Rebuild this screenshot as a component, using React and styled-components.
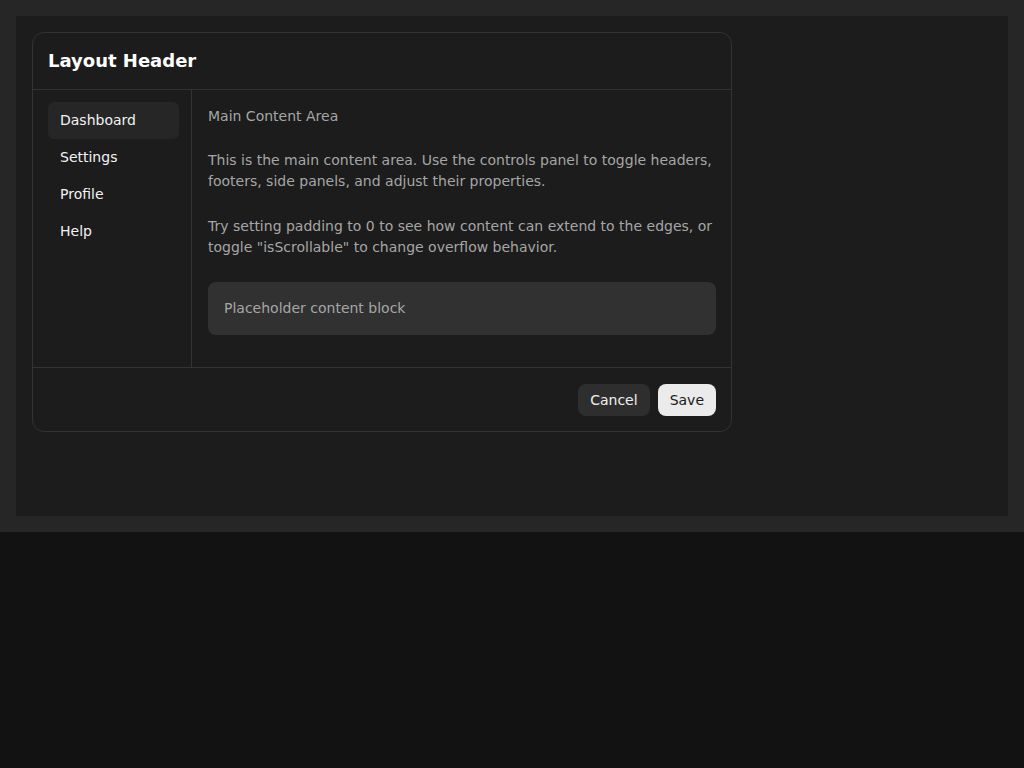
import React from "react";
import styled, { createGlobalStyle } from "styled-components";

const GlobalStyle = createGlobalStyle`
  html, body {
    margin: 0;
    padding: 0;
    background: #121212;
    font-family: "DejaVu Sans", "Noto Sans", sans-serif;
  }
  * {
    box-sizing: border-box;
  }
`;

const Stage = styled.div`
  background: #262626;
  padding: 16px;
`;

const Canvas = styled.div`
  background: #1c1c1c;
  padding: 16px;
  height: 500px;
`;

const Card = styled.div`
  width: 700px;
  border: 1px solid #333333;
  border-radius: 12px;
  background: #1c1c1c;
  display: flex;
  flex-direction: column;
  overflow: hidden;
`;

const Header = styled.div`
  padding: 16px 15px;
  border-bottom: 1px solid #333333;
`;

const Title = styled.h2`
  margin: 0;
  font-size: 18px;
  line-height: 24px;
  font-weight: 700;
  color: #ffffff;
`;

const Body = styled.div`
  display: flex;
`;

const Sidebar = styled.nav`
  width: 159px;
  flex-shrink: 0;
  border-right: 1px solid #333333;
  padding: 12px 12px 12px 15px;
  display: flex;
  flex-direction: column;
`;

const NavItem = styled.div`
  padding: 8px 12px;
  font-size: 14px;
  line-height: 21px;
  color: #f2f2f2;
  border-radius: 6px;
  background: ${(props) => (props.$active ? "#262626" : "transparent")};
  cursor: pointer;
`;

const Main = styled.main`
  flex: 1;
  padding: 16px 15px 16px 16px;
  color: #a6a6a6;
  font-size: 14px;
  line-height: 21px;
`;

const Label = styled.div`
  margin-bottom: 23px;
`;

const Paragraph = styled.p`
  margin: 0 0 24px;
`;

const Placeholder = styled.div`
  background: #313131;
  border-radius: 8px;
  padding: 16px;
  margin-bottom: 16px;
`;

const Footer = styled.div`
  border-top: 1px solid #333333;
  padding: 16px 15px 15px;
  display: flex;
  justify-content: flex-end;
  gap: 8px;
`;

const Button = styled.button`
  font-family: inherit;
  font-size: 14px;
  line-height: 20px;
  padding: 6px 12px;
  border: none;
  border-radius: 8px;
  cursor: pointer;
  background: ${(props) => (props.$primary ? "#ebebeb" : "#2e2e2e")};
  color: ${(props) => (props.$primary ? "#1a1a1a" : "#f0f0f0")};
`;

const navItems = ["Dashboard", "Settings", "Profile", "Help"];

const App = () => {
  return (
    <>
      <GlobalStyle />
      <Stage>
        <Canvas>
          <Card>
            <Header>
              <Title>Layout Header</Title>
            </Header>
            <Body>
              <Sidebar>
                {navItems.map((item, i) => (
                  <NavItem key={item} $active={i === 0}>
                    {item}
                  </NavItem>
                ))}
              </Sidebar>
              <Main>
                <Label>Main Content Area</Label>
                <Paragraph>
                  This is the main content area. Use the controls panel to
                  toggle headers, footers, side panels, and adjust their
                  properties.
                </Paragraph>
                <Paragraph>
                  Try setting padding to 0 to see how content can extend to the
                  edges, or toggle "isScrollable" to change overflow behavior.
                </Paragraph>
                <Placeholder>Placeholder content block</Placeholder>
              </Main>
            </Body>
            <Footer>
              <Button>Cancel</Button>
              <Button $primary>Save</Button>
            </Footer>
          </Card>
        </Canvas>
      </Stage>
    </>
  );
};

export default App;
